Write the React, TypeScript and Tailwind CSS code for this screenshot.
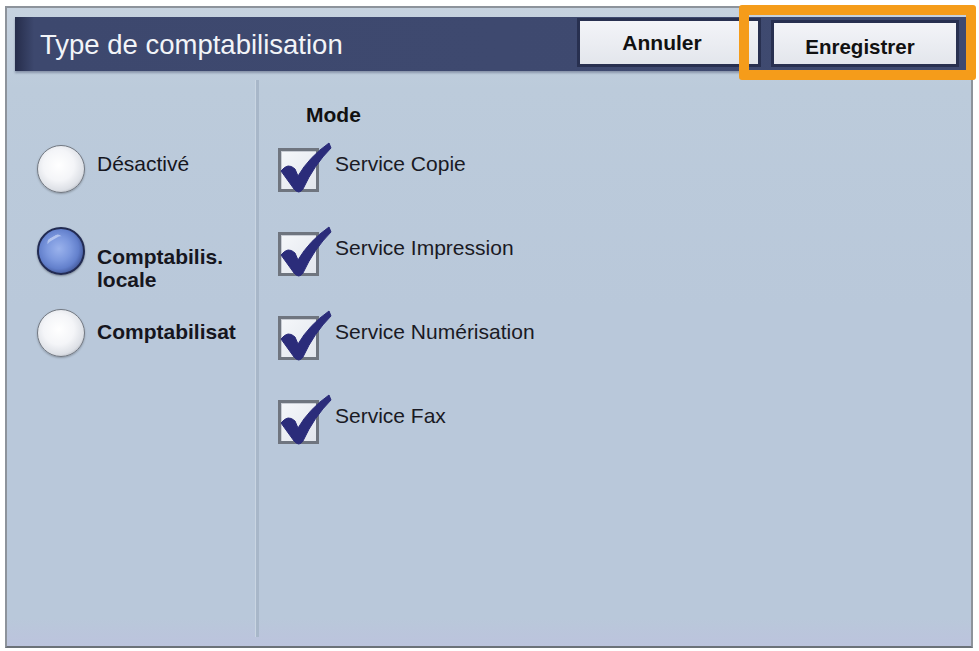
import React from "react";

const font = { fontFamily: '"Liberation Sans", Arial, sans-serif' };

function Radio({ selected }: { selected?: boolean }) {
  return selected ? (
    <div className="relative w-[48px] h-[48px] shrink-0 rounded-full border-[2px] border-[#222b52] bg-[radial-gradient(circle_at_45%_45%,#9ab2ec_0%,#7c98de_35%,#6380cc_58%,#3b4f90_80%,#252f5a_94%)] shadow-[0_1px_2px_rgba(0,0,0,0.35)]">
      <div className="absolute left-[8px] top-[7px] w-[16px] h-[10px] rounded-full border-t-[3px] border-[#c9d6f6] rotate-[-30deg] opacity-70" />
    </div>
  ) : (
    <div className="w-[48px] h-[48px] shrink-0 rounded-full border border-[#737982] bg-[radial-gradient(circle_at_45%_42%,#ffffff_0%,#f4f5f8_42%,#dde0e6_68%,#a0a5ae_84%,#7e848d_100%)] shadow-[0_1px_2px_rgba(0,0,0,0.25)]" />
  );
}

function Check() {
  return (
    <div className="relative w-[41px] h-[44px] shrink-0 border-[3px] border-[#6f757f] bg-[linear-gradient(135deg,#f5f7fa,#e2e6ed)] shadow-[inset_1px_1px_0_#c8ccd4]">
      <svg
        className="absolute left-[-3px] top-[-11px]"
        width="56"
        height="56"
        viewBox="0 0 56 56"
      >
        <path
          d="M3 31 Q10 22 17 29 L20 36 Q31 17 51 3 L53 8 Q36 25 25 49 Q21 55 16 49 Z"
          fill="#2b2c7a"
          stroke="#2b2c7a"
          strokeWidth="1"
          strokeLinejoin="round"
        />
      </svg>
    </div>
  );
}

export default function App() {
  const radios = [
    { label: "Désactivé", bold: false, mt: "mt-[7px]", selected: false },
    { label: "Comptabilis.\nlocale", bold: true, mt: "mt-[18px]", selected: true },
    { label: "Comptabilisat", bold: true, mt: "mt-[11px]", selected: false },
  ];
  const services = [
    "Service Copie",
    "Service Impression",
    "Service Numérisation",
    "Service Fax",
  ];
  return (
    <div className="w-[979px] h-[651px] bg-white pt-[6px] pl-[5px]" style={font}>
      <div className="w-[968px] h-[642px] flex flex-col border-[2px] border-[#8d939b] border-b-[#6c7178] bg-[linear-gradient(to_bottom,#c6d2df_0px,#bccbdb_80px,#b9c8da_300px,#b9c8da_610px,#bcc3dd_100%)]">
        {/* header */}
        <div className="mt-[9px] ml-[8px] mr-[4px] h-[54px] flex items-start bg-[linear-gradient(to_right,#262d4b,#3d486e_2%,#3f4a70_100%)] shadow-[0_2px_2px_rgba(40,50,80,0.35)]">
          <div className="flex-1 h-full flex items-center pl-[25px] pt-[1px] text-[27.5px] text-[#f2f4f8]">
            Type de comptabilisation
          </div>
          <div className="mt-[1px] w-[184px] h-[49px] flex items-center justify-center border-[3px] border-[#283050] bg-[linear-gradient(to_bottom,#f3f4f8,#e3e6ec)] text-[21px] font-bold text-[#111]">
            <span className="pr-[14px]">Annuler</span>
          </div>
          <div className="relative ml-[10px] mr-[8px] mt-[3px]">
            <div className="w-[188px] h-[47px] flex items-center justify-center pt-[8px] pr-[10px] border-[3px] border-[#283050] bg-[linear-gradient(to_bottom,#f3f4f8,#e3e6ec)] text-[20.5px] font-bold text-[#111]">
              Enregistrer
            </div>
            <div className="absolute left-[-32px] top-[-15px] right-[-17px] bottom-[-13px] border-[10px] border-[#f59c1a] rounded-[3px]" />
          </div>
        </div>

        {/* body */}
        <div className="flex-1 flex">
          <div className="w-[248px] pl-[30px] pt-[74px] flex flex-col gap-[34px]">
            {radios.map((r) => (
              <div key={r.label} className="h-[48px] flex items-start gap-[12px]">
                <Radio selected={r.selected} />
                <div
                  className={`${r.mt} text-[21px] leading-[23px] whitespace-pre text-[#16161e] ${
                    r.bold ? "font-bold" : ""
                  }`}
                >
                  {r.label}
                </div>
              </div>
            ))}
          </div>
          <div className="w-[4px] mt-[9px] mb-[9px] bg-[#a8b7c9] border-l-[1px] border-[#c9d5e2]" />
          <div className="flex-1 pt-[32px] pl-[19px] flex flex-col">
            <div className="ml-[28px] text-[21px] leading-[23px] font-bold text-[#111]">Mode</div>
            <div className="mt-[22px] flex flex-col gap-[40px]">
              {services.map((s) => (
                <div key={s} className="h-[44px] flex items-start gap-[16px]">
                  <Check />
                  <div className="mt-[4px] text-[21px] leading-[23px] text-[#1a1a24]">{s}</div>
                </div>
              ))}
            </div>
          </div>
        </div>
      </div>
    </div>
  );
}
